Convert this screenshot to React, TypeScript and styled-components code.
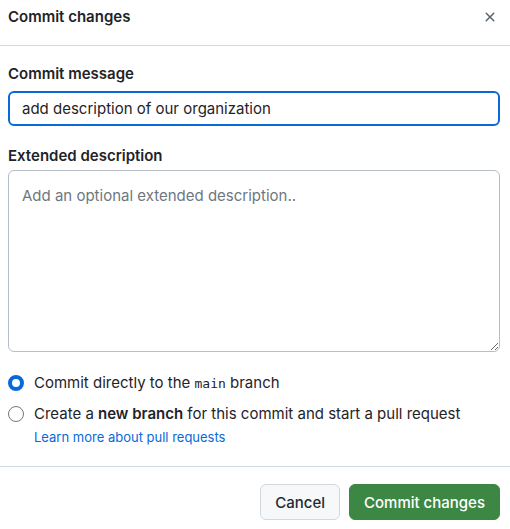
import * as React from "react";
import styled, { createGlobalStyle } from "styled-components";

const GlobalStyle = createGlobalStyle`
    html, body {
        margin: 0;
        padding: 0;
        background: #ffffff;
    }
    body {
        font-family: Inter, "Liberation Sans", Arial, sans-serif;
        color: #1f2328;
        font-size: 15px;
    }
`;

export default function App() {
    const [message, setMessage] = React.useState("add description of our organization");
    const [description, setDescription] = React.useState("");
    const [target, setTarget] = React.useState<"direct" | "branch">("direct");

    return (
        <>
            <GlobalStyle />
            <Dialog>
                <Header>
                    <Title>Commit changes</Title>
                    <CloseButton aria-label="Close">
                        <svg width="16" height="16" viewBox="0 0 16 16" fill="#59636e">
                            <path d="M3.72 3.72a.75.75 0 0 1 1.06 0L8 6.94l3.22-3.22a.749.749 0 0 1 1.275.326.749.749 0 0 1-.215.734L9.06 8l3.22 3.22a.749.749 0 0 1-.326 1.275.749.749 0 0 1-.734-.215L8 9.06l-3.22 3.22a.751.751 0 0 1-1.042-.018.751.751 0 0 1-.018-1.042L6.94 8 3.72 4.78a.75.75 0 0 1 0-1.06Z" />
                        </svg>
                    </CloseButton>
                </Header>

                <Body>
                    <Field gap={7}>
                        <Label htmlFor="commit-message">Commit message</Label>
                        <TextInput
                            id="commit-message"
                            value={message}
                            onChange={(e) => setMessage(e.target.value)}
                        />
                    </Field>

                    <Field gap={4}>
                        <Label htmlFor="commit-description">Extended description</Label>
                        <TextArea
                            id="commit-description"
                            placeholder="Add an optional extended description.."
                            value={description}
                            onChange={(e) => setDescription(e.target.value)}
                        />
                    </Field>

                    <RadioGroup>
                        <RadioRow>
                            <Radio checked={target === "direct"} onClick={() => setTarget("direct")} />
                            <RadioText>
                                Commit directly to the <Code>main</Code> branch
                            </RadioText>
                        </RadioRow>
                        <RadioRow>
                            <Radio checked={target === "branch"} onClick={() => setTarget("branch")} />
                            <RadioText>
                                Create a <strong>new branch</strong> for this commit and start a pull request
                            </RadioText>
                        </RadioRow>
                        <HelpLink href="#">Learn more about pull requests</HelpLink>
                    </RadioGroup>
                </Body>

                <Footer>
                    <Button>Cancel</Button>
                    <Button primary>Commit changes</Button>
                </Footer>
            </Dialog>
        </>
    );
}

const Dialog = styled.div`
    display: flex;
    flex-direction: column;
    width: 510px;
    min-height: 529px;
    background: #ffffff;
`

const Header = styled.div`
    display: flex;
    align-items: flex-start;
    justify-content: space-between;
    height: 46px;
    box-sizing: border-box;
    padding: 7px 12px 0 8px;
    border-bottom: 1px solid #d1d9e0;
`

const Title = styled.h1`
    margin: 0;
    font-size: 15px;
    font-weight: 600;
    line-height: 20px;
`

const CloseButton = styled.button`
    display: flex;
    align-items: center;
    justify-content: center;
    width: 16px;
    height: 20px;
    padding: 0;
    border: none;
    background: transparent;
    cursor: pointer;
`

const Body = styled.div`
    display: flex;
    flex-direction: column;
    gap: 20px;
    padding: 18px 10px 0 8px;
`

const Field = styled.div<{ gap: number }>`
    display: flex;
    flex-direction: column;
    gap: ${(p) => p.gap}px;
`

const Label = styled.label`
    font-size: 15px;
    font-weight: 600;
    line-height: 20px;
`

const TextInput = styled.input`
    box-sizing: border-box;
    width: 100%;
    height: 35px;
    padding: 0 12px;
    font-family: inherit;
    font-size: 15px;
    color: #1f2328;
    border: 2px solid #0969da;
    border-radius: 6px;
    outline: none;
`

const TextArea = styled.textarea`
    box-sizing: border-box;
    width: 100%;
    height: 182px;
    padding: 15px 13px;
    font-family: inherit;
    font-size: 15px;
    line-height: 20px;
    color: #1f2328;
    border: 1px solid #b7bec6;
    border-radius: 6px;
    outline: none;
    resize: vertical;

    &::placeholder {
        color: #6e7781;
    }
`

const RadioGroup = styled.div`
    display: flex;
    flex-direction: column;
    margin-top: 1px;
`

const RadioRow = styled.label`
    display: flex;
    align-items: center;
    gap: 10px;
    height: 20px;
    margin-bottom: 11px;
    cursor: pointer;
`

const Radio = styled.span<{ checked: boolean }>`
    box-sizing: border-box;
    flex: none;
    width: 16px;
    height: 16px;
    border-radius: 50%;
    border: ${(p) => (p.checked ? "4px solid #0969da" : "1px solid #6e7781")};
    background: #ffffff;
`

const RadioText = styled.span`
    font-size: 15px;
    line-height: 20px;

    strong {
        font-weight: 600;
    }
`

const Code = styled.code`
    font-family: "DejaVu Sans Mono", "Liberation Mono", monospace;
    font-size: 13px;
`

const HelpLink = styled.a`
    margin: -7px 0 0 26px;
    font-size: 13px;
    line-height: 18px;
    color: #0969da;
    text-decoration: none;
`

const Footer = styled.div`
    display: flex;
    justify-content: flex-end;
    gap: 9px;
    margin-top: 20px;
    padding: 17px 10px 9px 8px;
    border-top: 1px solid #d1d9e0;
`

const Button = styled.button<{ primary?: boolean }>`
    height: 36px;
    padding: 0 14px;
    font-family: inherit;
    font-size: 15px;
    font-weight: 500;
    border-radius: 6px;
    cursor: pointer;
    color: ${(p) => (p.primary ? "#ffffff" : "#25292e")};
    background: ${(p) => (p.primary ? "#3d8744" : "#f6f8fa")};
    border: 1px solid ${(p) => (p.primary ? "#3d8744" : "#d1d9e0")};
`
